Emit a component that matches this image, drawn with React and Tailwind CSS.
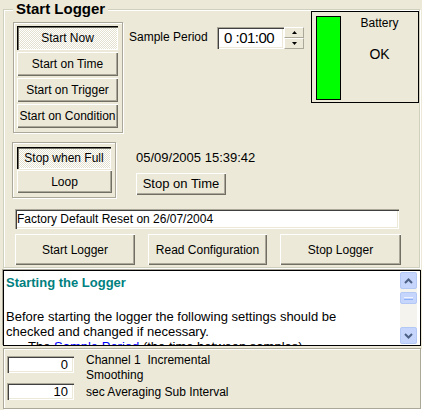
const raised =
  "bg-[#ECE9D8] shadow-[inset_1px_1px_0_#fff,inset_-1px_-1px_0_#716F64,inset_-2px_-2px_0_#ACA899]";
const pressed =
  "bg-[repeating-conic-gradient(#fff_0_25%,#e4e1d0_0_50%)] bg-size-[2px_2px] shadow-[inset_1px_1px_0_#000,inset_2px_2px_0_#716F64,inset_-1px_-1px_0_#fff]";
const sunken =
  "bg-white shadow-[inset_1px_1px_0_#ACA899,inset_2px_2px_0_#404040,inset_-1px_-1px_0_#fff,inset_-2px_-2px_0_#ECE9D8]";
const etched = "border border-[#ACA899] shadow-[inset_1px_1px_0_#fff,1px_1px_0_#fff]";

const Btn = ({ children, className = "", down = false }) => (
  <div className={`flex items-center justify-center ${down ? pressed : raised} ${className}`}>
    {children}
  </div>
);

const ScrollBtn = ({ up }) => (
  <div className="w-[17px] h-[17px] rounded-[2px] border border-[#B4C8F6] bg-[#C5D5FB] flex items-center justify-center">
    <svg width="9" height="6" viewBox="0 0 9 6">
      <path
        d={up ? "M1 5 L4.5 1.5 L8 5" : "M1 1 L4.5 4.5 L8 1"}
        fill="none"
        stroke="#4D6185"
        strokeWidth="2"
      />
    </svg>
  </div>
);

export default function App() {
  return (
    <div className="w-[422px] h-[410px] overflow-hidden bg-[#ECE9D8] font-['Liberation_Sans',Arial,sans-serif] text-[12px] leading-[14px] text-black">
      {/* Start Logger group */}
      <div className="relative mt-[9px] ml-[3px] w-[417px] h-[259px] border border-[#D0D0BF] shadow-[inset_1px_1px_0_#fff,1px_1px_0_#fff]">
        <span className="absolute -top-[10px] left-[9px] bg-[#ECE9D8] px-[3px] text-[15px] leading-[18px] font-bold">
          Start Logger
        </span>

        {/* row 1 */}
        <div className="flex mt-[12px]">
          <div className={`ml-[9px] w-[110px] h-[111px] ${etched} pt-[3px] pl-[3px] flex flex-col gap-[2px]`}>
            <Btn down className="w-[101px] h-[24px]">Start Now</Btn>
            <Btn className="w-[101px] h-[24px]">Start on Time</Btn>
            <Btn className="w-[101px] h-[24px]">Start on Trigger</Btn>
            <Btn className="w-[101px] h-[24px]">Start on Condition</Btn>
          </div>
          <div className="ml-[6px] mt-[8px] w-[88px]">Sample Period</div>
          <div className="mt-[5px] flex h-[22px]">
            <div className={`w-[67px] h-[22px] ${sunken} pl-[7px] text-[15px] tracking-[-0.5px] leading-[22px]`}>0 :01:00</div>
            <div className="w-[20px] flex flex-col">
              <div className="h-[11px] bg-[#ECE9D8] border border-t-[#fff] border-l-[#fff] border-r-[#ACA899] border-b-[#ACA899] flex items-center justify-center">
                <svg width="5" height="3" viewBox="0 0 5 3"><path d="M2.5 0 L5 3 L0 3Z" fill="#000" /></svg>
              </div>
              <div className="h-[11px] bg-[#ECE9D8] border border-t-[#fff] border-l-[#fff] border-r-[#ACA899] border-b-[#ACA899] flex items-center justify-center">
                <svg width="5" height="3" viewBox="0 0 5 3"><path d="M0 0 L5 0 L2.5 3Z" fill="#000" /></svg>
              </div>
            </div>
          </div>
          <div className="ml-[7px] -mt-[11px] w-[108px] h-[92px] border border-black flex">
            <div className="ml-[4px] mt-[4px] w-[25px] h-[84px] bg-[#00FF00] border border-black" />
            <div className="flex-1 flex flex-col items-center pt-[4px]">
              <div>Battery</div>
              <div className="mt-[16px] text-[14px] leading-[16px]">OK</div>
            </div>
          </div>
        </div>

        {/* row 2 */}
        <div className="flex mt-[9px]">
          <div className={`ml-[8px] w-[104px] h-[56px] ${etched} pt-[4px] pl-[4px] flex flex-col gap-[1px]`}>
            <Btn down className="w-[94px] h-[22px]">Stop when Full</Btn>
            <Btn className="w-[95px] h-[23px]">Loop</Btn>
          </div>
          <div className="ml-[20px] flex flex-col">
            <div className="mt-[8px] text-[13px] leading-[15px]">05/09/2005 15:39:42</div>
            <Btn className="mt-[8px] w-[90px] h-[22px] text-[13px]">Stop on Time</Btn>
          </div>
        </div>

        {/* row 3 */}
        <div className={`mt-[11px] ml-[11px] w-[384px] h-[20px] ${sunken} pl-[2px] leading-[20px]`}>
          Factory Default Reset on 26/07/2004
        </div>

        {/* row 4 */}
        <div className="flex mt-[5px] ml-[11px] gap-[13px]">
          <Btn className="w-[120px] h-[31px]">Start Logger</Btn>
          <Btn className="w-[119px] h-[31px]">Read Configuration</Btn>
          <Btn className="w-[121px] h-[31px]">Stop Logger</Btn>
        </div>
      </div>

      {/* help panel */}
      <div className="mt-[2px] ml-[3px] w-[418px] h-[76px] bg-white border border-black shadow-[-1px_-1px_0_#ACA899] flex overflow-hidden">
        <div className="flex-1 pl-[2px] pt-[4px] text-[13px] leading-[15px] overflow-hidden whitespace-nowrap">
          <div className="font-bold text-[#008080]">Starting the Logger</div>
          <div className="mt-[19px]">Before starting the logger the following settings should be</div>
          <div>checked and changed if necessary.</div>
          <div className="pl-[22px]">
            The <span className="text-[#0000FF]">Sample Period</span> (the time between samples)
          </div>
        </div>
        <div className="w-[17px] mr-[3px] my-[1px] bg-[#F4F3EE] flex flex-col">
          <ScrollBtn up />
          <div className="mt-[3px] h-[12px] rounded-[2px] border border-[#B4C8F6] bg-[#C5D5FB] flex flex-col justify-center items-center gap-[1px]">
            <div className="w-[9px] h-[1px] bg-[#EEF3FF]" />
            <div className="w-[9px] h-[1px] bg-[#8CB0F8]" />
          </div>
          <div className="flex-1" />
          <ScrollBtn />
        </div>
      </div>

      {/* bottom panel */}
      <div className="mt-[2px] ml-[3px] w-[418px] h-[61px] border border-[#ACA899] shadow-[inset_1px_1px_0_#fff,1px_1px_0_#fff] flex pt-[7px] pl-[3px]">
        <div className="flex flex-col gap-[10px]">
          <div className={`w-[67px] h-[17px] ${sunken} pr-[6px] text-right text-[13px] leading-[17px]`}>0</div>
          <div className={`w-[67px] h-[17px] ${sunken} pr-[6px] text-right text-[13px] leading-[17px]`}>10</div>
        </div>
        <div className="ml-[12px] -mt-[3px] text-[12px] leading-[15px] whitespace-pre">
          <div>Channel 1  Incremental</div>
          <div>Smoothing</div>
          <div className="mt-[2px]">sec Averaging Sub Interval</div>
        </div>
      </div>
    </div>
  );
}
